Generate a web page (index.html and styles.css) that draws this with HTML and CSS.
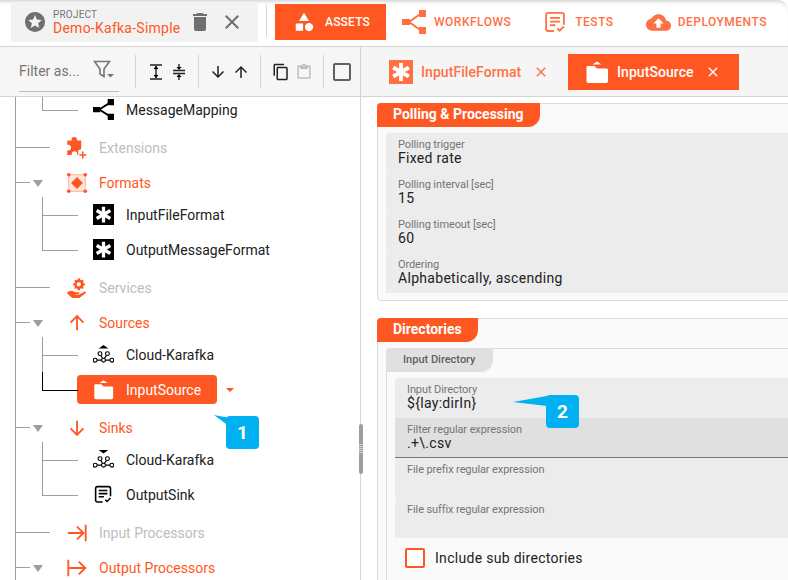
FILE: index.html
```html
<!DOCTYPE html>
<html lang="en">
<head>
<meta charset="utf-8">
<title>Demo-Kafka-Simple</title>
<link rel="stylesheet" href="styles.css">
</head>
<body>
<div class="app">
  <header class="header">
    <div class="project">
      <svg class="project-star" viewBox="0 0 24 24"><path d="M16.23,18L12,15.45L7.77,18L8.89,13.19L5.16,9.96L10.08,9.54L12,5L13.92,9.53L18.84,9.95L15.11,13.18L16.23,18M12,2C6.47,2 2,6.47 2,12A10,10 0 0,0 12,22A10,10 0 0,0 22,12C22,6.47 17.5,2 12,2Z"/></svg>
      <div class="project-text">
        <div class="project-label">PROJECT</div>
        <div class="project-name">Demo-Kafka-Simple</div>
      </div>
      <svg class="project-trash" viewBox="0 0 24 24"><path d="M19 4h-3.5l-1-1h-5l-1 1H5v2h14V4zM6 19a2 2 0 0 0 2 2h8a2 2 0 0 0 2-2V7H6v12z"/></svg>
      <svg class="project-close" viewBox="0 0 24 24"><path d="M19 6.41L17.59 5 12 10.59 6.41 5 5 6.41 10.59 12 5 17.59 6.41 19 12 13.41 17.59 19 19 17.59 13.41 12z"/></svg>
    </div>
    <div class="header-sep"></div>
    <nav class="nav">
      <div class="nav-item nav-active">
        <svg class="nav-icon-shapes" viewBox="0 0 24 24"><path d="M11,13.5V21.5H3V13.5H11M12,2L17.5,11H6.5L12,2M17.5,13C20,13 22,15 22,17.5C22,20 20,22 17.5,22C15,22 13,20 13,17.5C13,15 15,13 17.5,13Z"/></svg>
        <span>ASSETS</span>
      </div>
      <div class="nav-item nav-workflows">
        <svg class="nav-icon-flow" viewBox="0 0 24 24"><path d="M0 9h8v6H0zM17 0h7v7h-7zM17 17h7v7h-7z"/><path class="flow-line" d="M7 12 L19 3.5M7 12 L19 20.5"/></svg>
        <span>WORKFLOWS</span>
      </div>
      <div class="nav-item nav-tests">
        <svg class="nav-icon-tests" viewBox="0 0 24 24"><path class="doc-line" d="M11 21.8H4.5a2.2 2.2 0 0 1-2.2-2.2V4.2A2.2 2.2 0 0 1 4.500 2h15a2.200 2.200 0 0 1 2.200 2.200v10.800"/><path class="doc-line" d="M6.500 7.500h11M6.500 11.500h11M6.500 15.500h6M14.500 19l2.500 2.500 4.800-4.800"/></svg>
        <span>TESTS</span>
      </div>
      <div class="nav-item nav-deploy">
        <svg class="nav-icon-cloud" viewBox="0 0 24 24"><path d="M19.35 10.04C18.67 6.59 15.64 4 12 4 9.11 4 6.600 5.640 5.350 8.040 2.340 8.360 0 10.910 0 14c0 3.310 2.690 6 6 6h13c2.760 0 5-2.240 5-5 0-2.640-2.050-4.780-4.650-4.960zM14 13v4h-4v-4H7l5-5 5 5h-3z"/></svg>
        <span>DEPLOYMENTS</span>
      </div>
    </nav>
  </header>

  <div class="main">
    <aside class="left">
      <div class="toolbar">
        <div class="filter">
          <span class="filter-input">Filter as...</span>
          <svg class="filter-icon" viewBox="0 0 22 20"><path class="filter-stroke" d="M1.500 1.500h15L11 9v7.500L7 14V9z"/><path class="filter-caret" d="M14 14h7l-3.500 3.500z"/></svg>
        </div>
        <div class="tool-sep sep-a"></div>
        <svg class="tool tool-expand" viewBox="0 0 12 16"><path class="tool-stroke" d="M0 1h12M0 15h12M6 2v12"/><path d="M3.500 5 6 2l2.500 3zM3.500 11 6 14l2.500-3z"/></svg>
        <svg class="tool tool-collapse" viewBox="0 0 12 16"><path class="tool-stroke" d="M0 6.500h12M0 9.500h12M6 0v5M6 11v5"/><path d="M3.500 3 6 6l2.500-3zM3.500 13 6 10l2.500 3z"/></svg>
        <div class="tool-sep sep-b"></div>
        <svg class="tool tool-arrow" viewBox="0 0 24 24"><path d="M20 12l-1.410-1.410L13 16.170V4h-2v12.170l-5.580-5.590L4 12l8 8 8-8z"/></svg>
        <svg class="tool tool-arrow tool-up" viewBox="0 0 24 24"><path d="M4 12l1.410 1.410L11 7.830V20h2V7.830l5.580 5.590L20 12l-8-8-8 8z"/></svg>
        <div class="tool-sep sep-c"></div>
        <svg class="tool tool-copy" viewBox="0 0 24 24"><path d="M16 1H4c-1.100 0-2 .9-2 2v14h2V3h12V1zm3 4H8c-1.100 0-2 .9-2 2v14c0 1.100.9 2 2 2h11c1.100 0 2-.9 2-2V7c0-1.100-.9-2-2-2zm0 16H8V7h11v14z"/></svg>
        <svg class="tool tool-paste" viewBox="0 0 24 24"><path d="M19 3h-4.180C14.400 1.840 13.300 1 12 1s-2.400.84-2.820 2H5c-1.100 0-2 .9-2 2v14c0 1.100.9 2 2 2h14c1.100 0 2-.9 2-2V5c0-1.100-.9-2-2-2zm-7 0c.55 0 1 .45 1 1s-.45 1-1 1-1-.45-1-1 .45-1 1-1zm7 16H5V5h2v3h10V5h2v14z"/></svg>
        <div class="tool-sep sep-d"></div>
        <svg class="tool tool-check" viewBox="3 3 18 18"><path d="M19 5v14H5V5h14m0-2H5c-1.100 0-2 .9-2 2v14c0 1.100.9 2 2 2h14c1.100 0 2-.9 2-2V5c0-1.100-.9-2-2-2z"/></svg>
      </div>

      <div class="tree-wrap">
        <div class="tree">
          <div class="children first-children">
            <div class="leaf last">
              <svg class="ico" viewBox="2 2 20 20"><path d="M2 9.500h7v5H2zM16 2h6v6h-6zM16 16h6v6h-6z"/><path class="graph-line" d="M8 12l11-7M8 12l11 7"/></svg>
              <span class="label">MessageMapping</span>
            </div>
          </div>

          <div class="node">
            <span class="stub"></span>
            <svg class="ico-top o" viewBox="2.500 1 20.500 22"><path d="M17 4.500h-4.300V3.800a2.700 2.700 0 0 0-5.400 0v.7H3v4.300h1a2.800 2.800 0 0 1 0 5.600H3V19h4.500v-1a2.700 2.700 0 0 1 5.400 0v1H14v-5h1a2 2 0 0 0 2-2z"/><path class="plus" d="M18.500 15.500v7M15 19h7"/></svg>
            <span class="label muted">Extensions</span>
          </div>

          <div class="node">
            <span class="stub short"></span><span class="caret"></span>
            <svg class="ico-top o" viewBox="0 0 24 24"><rect class="sel-box" x="3" y="3" width="18" height="18"/><circle cx="3" cy="3" r="2"/><circle cx="21" cy="3" r="2"/><circle cx="3" cy="21" r="2"/><circle cx="21" cy="21" r="2"/><path d="M12 5.500 18.500 12 12 18.500 5.500 12z"/></svg>
            <span class="label o">Formats</span>
          </div>
          <div class="children">
            <div class="leaf">
              <svg class="ico" viewBox="0 0 24 24"><rect width="24" height="24"/><path class="star-w" d="M12 3v18M4.200 7.500l15.600 9M4.200 16.500l15.600-9"/></svg>
              <span class="label">InputFileFormat</span>
            </div>
            <div class="leaf last">
              <svg class="ico" viewBox="0 0 24 24"><rect width="24" height="24"/><path class="star-w" d="M12 3v18M4.200 7.500l15.600 9M4.200 16.500l15.600-9"/></svg>
              <span class="label">OutputMessageFormat</span>
            </div>
          </div>

          <div class="node">
            <span class="stub"></span>
            <svg class="ico-top o" viewBox="0 0 24 24"><path d="M12.800 1.500h2.400l.3 1.500 1.200.6 1.400-.7 1.200 1.200-.7 1.400.5 1.200 1.500.4V9l-1.500.4-.5 1.200.7 1.300-1.200 1.300-1.400-.8-1.200.5-.3 1.600h-2.400l-.4-1.600-1.200-.5-1.300.8L9.100 12l.7-1.300-.5-1.200L7.800 9V7.100l1.500-.4.500-1.200-.7-1.400 1.200-1.200 1.300.7 1.200-.6z"/><circle class="gear-hole" cx="14" cy="8" r="2.300"/><path d="M1 17.500c1.500-2 4-3 6-2.300l3.500 1.300h3c1.500 0 1.500 2 0 2h-3.500v.5h4.500l5.500-3c1.500-.8 2.500 1 1.300 1.800L14.500 23H7L4.500 21z"/></svg>
            <span class="label muted">Services</span>
          </div>

          <div class="node">
            <span class="stub short"></span><span class="caret"></span>
            <svg class="ico-top line-ico" viewBox="0 0 24 24"><path d="M12 20V5M5 11.500 12 4.500l7 7"/></svg>
            <span class="label o">Sources</span>
          </div>
          <div class="children">
            <div class="leaf">
              <svg class="ico" viewBox="0 0 24 24"><path d="M6.500 5 12 1 17.500 5z"/><g class="kafka"><circle cx="8" cy="11" r="2.200"/><circle cx="16.500" cy="11" r="2.200"/><circle cx="2.500" cy="18.500" r="2.200"/><circle cx="12" cy="18.500" r="2.200"/><circle cx="21.500" cy="18.500" r="2.200"/><path d="M4.700 18.500h5.100M14.200 18.500h5.100M9 13l2 3.500M15.500 13l-2.500 3.500"/></g></svg>
              <span class="label">Cloud-Karafka</span>
            </div>
            <div class="leaf selected last">
              <div class="pill">
                <svg class="ico" viewBox="0 0 24 24"><path class="w" d="M7.500 4.500 12 1.500l4.500 3z"/><path class="w" d="M1.500 7.500C1.500 6.500 2.200 6 3 6h6.500l2.500 2.500h9.500c.9 0 1.500.7 1.500 1.500v11c0 1-.7 2-1.500 2h-18C2.100 23 1.500 22 1.500 21z"/></svg>
                <span class="label">InputSource</span>
              </div>
              <span class="pill-caret"></span>
            </div>
          </div>

          <div class="node">
            <span class="stub short"></span><span class="caret"></span>
            <svg class="ico-top line-ico" viewBox="0 0 24 24"><path d="M12 4v15M5 12.500l7 7 7-7"/></svg>
            <span class="label o">Sinks</span>
          </div>
          <div class="children">
            <div class="leaf">
              <svg class="ico" viewBox="0 0 24 24"><path d="M6.500 1h11L12 5z"/><g class="kafka"><circle cx="8" cy="11" r="2.200"/><circle cx="16.500" cy="11" r="2.200"/><circle cx="2.500" cy="18.500" r="2.200"/><circle cx="12" cy="18.500" r="2.200"/><circle cx="21.500" cy="18.500" r="2.200"/><path d="M4.700 18.500h5.100M14.200 18.500h5.100M9 13l2 3.500M15.500 13l-2.500 3.500"/></g></svg>
              <span class="label">Cloud-Karafka</span>
            </div>
            <div class="leaf last">
              <svg class="ico" viewBox="0 0 24 24"><g class="tests-k"><path d="M11 20.500H5a2 2 0 0 1-2-2V5a2 2 0 0 1 2-2h13a2 2 0 0 1 2 2v9"/><path d="M6.500 7.500h10M6.500 11h10M6.500 14.500h6M14 18l2 2 4-4"/></g></svg>
              <span class="label">OutputSink</span>
            </div>
          </div>

          <div class="node">
            <span class="stub"></span>
            <svg class="ico-top line-ico" viewBox="0 0 24 24"><path d="M2 12h17M12 5l7 7-7 7M21.500 3v18"/></svg>
            <span class="label muted">Input Processors</span>
          </div>
          <div class="node">
            <span class="stub short"></span><span class="caret"></span>
            <svg class="ico-top line-ico" viewBox="0 0 24 24"><path d="M2.500 3v18M3 12h18M14 5l7 7-7 7"/></svg>
            <span class="label o">Output Processors</span>
          </div>
        </div>
      </div>
    </aside>

    <section class="right">
      <div class="tabs">
        <div class="tab">
          <svg class="tab-ico" viewBox="0 0 24 24"><rect width="24" height="24"/><path class="star-w2" d="M12 3v18M4.200 7.500l15.600 9M4.200 16.500l15.600-9"/></svg>
          <span class="tab-label">InputFileFormat</span>
          <svg class="tab-x" viewBox="0 0 24 24"><path d="M19 6.410L17.590 5 12 10.590 6.410 5 5 6.410 10.590 12 5 17.590 6.410 19 12 13.410 17.590 19 19 17.590 13.410 12z"/></svg>
        </div>
        <div class="tab tab-active">
          <svg class="tab-ico" viewBox="0 0 24 24"><path d="M7.500 4.500 12 1.500l4.500 3z"/><path d="M1.500 7.500C1.500 6.500 2.200 6 3 6h6.500l2.500 2.500h9.500c.9 0 1.500.7 1.500 1.500v11c0 1-.7 2-1.500 2h-18C2.100 23 1.500 22 1.500 21z"/></svg>
          <span class="tab-label">InputSource</span>
          <svg class="tab-x" viewBox="0 0 24 24"><path d="M19 6.410L17.590 5 12 10.590 6.410 5 5 6.410 10.590 12 5 17.590 6.410 19 12 13.410 17.590 19 19 17.590 13.410 12z"/></svg>
        </div>
      </div>
      <div class="content">
        <div class="card">
          <div class="legend">Polling &amp; Processing</div>
          <div class="fields">
            <div class="field"><div class="f-label">Polling trigger</div><div class="f-value">Fixed rate</div></div>
            <div class="field"><div class="f-label">Polling interval [sec]</div><div class="f-value">15</div></div>
            <div class="field"><div class="f-label">Polling timeout [sec]</div><div class="f-value">60</div></div>
            <div class="field"><div class="f-label">Ordering</div><div class="f-value">Alphabetically, ascending</div></div>
          </div>
        </div>
        <div class="card card-dirs">
          <div class="legend">Directories</div>
          <div class="inner">
            <div class="inner-tab">Input Directory</div>
            <div class="fields inner-fields">
              <div class="field"><div class="f-label">Input Directory</div><div class="f-value">${lay:dirIn}</div></div>
              <div class="field field-hover"><div class="f-label">Filter regular expression</div><div class="f-value">.+\.csv</div></div>
              <div class="field"><div class="f-label">File prefix regular expression</div><div class="f-value"></div></div>
              <div class="field"><div class="f-label">File suffix regular expression</div><div class="f-value"></div></div>
            </div>
            <div class="check-row"><span class="check-box"></span><span class="check-label">Include sub directories</span></div>
          </div>
        </div>
      </div>
    </section>
  </div>

  <div class="splitter"></div>
  <div class="callout callout-1">
    <svg class="tail tail-1" viewBox="0 0 16 12"><path d="M0 0 16 3v9z"/></svg>
    <span>1</span>
  </div>
  <div class="callout callout-2">
    <svg class="tail tail-2" viewBox="0 0 34 10"><path d="M0 6 34 0v10z"/></svg>
    <span>2</span>
  </div>
</div>
</body>
</html>
```

FILE: styles.css
```css
* { box-sizing: border-box; }
html, body { margin: 0; padding: 0; height: 100%; background: #fff; }
body { font-family: Roboto, "Liberation Sans", sans-serif; color: #212121; overflow: hidden; }
.app { position: relative; width: 788px; height: 580px; overflow: hidden; display: flex; flex-direction: column; }

/* Header */
.header { height: 47px; flex: none; display: flex; align-items: flex-start; border-bottom: 1px solid #d4d4d4; box-shadow: inset 0 4px 4px -3px rgba(0,0,0,.22); border-top-right-radius: 10px; }
.project { margin: 2px 0 0 11px; width: 247px; height: 40px; background: #f2f2f2; display: flex; align-items: center; border-radius: 2px; }
.project-star { width: 24px; height: 24px; margin-left: 12px; fill: #6f6f6f; flex: none; }
.project-text { margin-left: 6px; width: 141px; }
.project-label { font-size: 10px; line-height: 11px; color: #757575; letter-spacing: .2px; }
.project-name { font-size: 14px; line-height: 16px; color: #ff5722; letter-spacing: .25px; white-space: nowrap; }
.project-trash { width: 24px; height: 24px; fill: #6f6f6f; margin-left: -6px; flex: none; }
.project-close { width: 24px; height: 24px; fill: #6f6f6f; margin-left: 8px; flex: none; }
.header-sep { width: 1px; height: 32px; background: #d4d4d4; margin: 5px 0 0 8px; flex: none; }
.nav { display: flex; margin: 4px 0 0 8px; }
.nav-item { height: 36px; display: flex; align-items: center; font-size: 12px; font-weight: 500; color: #ff7043; letter-spacing: .5px; }
.nav-active { width: 111px; background: #ff5722; color: #fff; padding-left: 18px; gap: 10px; letter-spacing: .2px; }
.nav-active svg { width: 22px; height: 22px; fill: #fff; flex: none; }
.nav-workflows { margin-left: 16px; gap: 8px; }
.nav-tests { margin-left: 33px; gap: 9px; }
.nav-deploy { margin-left: 32px; gap: 7px; }
.nav-icon-flow { width: 24px; height: 24px; fill: #ff7043; }
.flow-line { fill: none; stroke: #ff7043; stroke-width: 2; }
.nav-icon-tests { width: 22px; height: 22px; }
.doc-line { fill: none; stroke: #ff7043; stroke-width: 2; }
.nav-icon-cloud { width: 25px; height: 25px; fill: #ff7043; }

/* Main */
.main { flex: 1; display: flex; min-height: 0; }
.left { width: 361px; flex: none; border-right: 1px solid #d4d4d4; display: flex; flex-direction: column; }
.toolbar { height: 50px; flex: none; background: #f6f6f6; border-bottom: 1px solid #d4d4d4; display: flex; align-items: center; }
.filter { width: 100px; margin: 0 0 2px 19px; height: 43px; padding-top: 2px; border-bottom: 1px solid #bdbdbd; display: flex; align-items: center; justify-content: space-between; flex: none; }
.filter-input { font-size: 14px; color: #757575; }
.filter-icon { width: 22px; height: 20px; margin: -2px 4px 0 0; flex: none; }
.filter-stroke { fill: none; stroke: #757575; stroke-width: 1.6; }
.filter-caret { fill: #757575; }
.tool-sep { width: 1px; height: 33px; background: #d4d4d4; flex: none; }
.sep-a { margin-left: 16px; }
.sep-b { margin-left: 13px; }
.sep-c { margin-left: 10px; }
.sep-d { margin-left: 10px; }
.tool { flex: none; }
.tool-stroke { fill: none; stroke: #212121; stroke-width: 1.4; }
.tool-expand { width: 12px; height: 16px; margin-left: 14px; }
.tool-collapse { width: 12px; height: 16px; margin-left: 11px; }
.tool-arrow { width: 18px; height: 18px; margin-left: 10px; fill: #212121; }
.tool-up { margin-left: 5px; }
.tool-copy { width: 18px; height: 18px; margin-left: 11px; fill: #212121; }
.tool-paste { width: 18px; height: 18px; margin-left: 5px; fill: #bdbdbd; }
.tool-check { width: 18px; height: 18px; margin-left: 9px; fill: #616161; }

/* Tree */
.tree-wrap { flex: 1; overflow: hidden; min-height: 0; }
.tree { position: relative; margin-top: -5px; }
.tree::before { content: ""; position: absolute; left: 15px; top: 0; bottom: -40px; width: 1px; background: #9e9e9e; }
.node { height: 35px; display: flex; align-items: center; }
.stub { width: 34px; height: 1px; margin-left: 16px; background: #9e9e9e; flex: none; }
.stub.short { width: 14px; }
.caret { height: 0; border-left: 5px solid transparent; border-right: 5px solid transparent; border-top: 7px solid #9e9e9e; margin: 1px 7px 0 3px; flex: none; width: 10px; }
.ico-top { width: 22px; height: 22px; margin-left: 16px; margin-right: 11px; flex: none; }
.o { color: #ff5722; fill: #ff5722; }
.label { font-size: 14px; line-height: 20px; white-space: nowrap; color: #212121; }
.label.o { color: #ff5722; }
.label.muted { color: #bdbdbd; }
.plus { fill: none; stroke: #ff5722; stroke-width: 1.500; }
.sel-box { fill: #ffccbc; fill-opacity: .5; stroke: #ffab91; stroke-width: 1; }
.gear-hole { fill: #fff; }
.line-ico { fill: none; stroke: #ff5722; stroke-width: 2; }

.children { margin: -3px 0 3px; }
.first-children { margin-top: 0; }
.leaf { height: 35px; margin-left: 77px; display: flex; align-items: center; position: relative; }
.leaf::before { content: ""; position: absolute; left: -35px; top: 0; width: 35px; height: 50%; border-left: 1px solid #9e9e9e; border-bottom: 1px solid #9e9e9e; }
.leaf::after { content: ""; position: absolute; left: -35px; top: 50%; height: 50%; width: 1px; background: #9e9e9e; }
.leaf.last::after { display: none; }
.leaf.selected::before { border-color: #000; }
.ico { width: 21px; height: 21px; margin-left: 16px; margin-right: 12px; flex: none; fill: #000; }
.graph-line { fill: none; stroke: #000; stroke-width: 1.800; }
.star-w { fill: none; stroke: #fff; stroke-width: 3.800; }
.kafka { fill: none; stroke: #000; stroke-width: 1.300; }
.tests-k { fill: none; stroke: #000; stroke-width: 1.800; }
.pill { width: 140px; height: 29px; background: #ff5722; border-radius: 4px; display: flex; align-items: center; }
.pill .label { color: #fff; }
.pill .w { fill: #fff; }
.pill-caret { width: 0; height: 0; border-left: 4px solid transparent; border-right: 4px solid transparent; border-top: 4px solid #ff5722; margin-left: 9px; flex: none; }

/* Tabs */
.right { flex: 1; min-width: 0; display: flex; flex-direction: column; }
.tabs { height: 50px; flex: none; background: #f5f5f5; border-bottom: 1px solid #d4d4d4; display: flex; padding: 7px 0 0 28px; }
.tab { height: 36px; display: flex; align-items: center; font-size: 14px; font-weight: 500; color: #ff7043; width: 179px; flex: none; }
.tab-ico { width: 24px; height: 24px; flex: none; fill: #ff7043; }
.star-w2 { fill: none; stroke: #fff; stroke-width: 3.800; }
.tab-label { margin-left: 8px; width: 100px; white-space: nowrap; letter-spacing: .07px; }
.tab-x { width: 16px; height: 16px; fill: #ff7043; flex: none; margin-left: 12px; }
.tab-active { background: #ff5722; color: #fff; width: 171px; padding-left: 17px; }
.tab-active .tab-ico { fill: #fff; }
.tab-active .tab-label { width: 76px; }
.tab-active .tab-x { fill: #fff; }

/* Content */
.content { flex: 1; min-height: 0; overflow: hidden; padding: 6px 0 0 16px; background: #fff; }
.card { margin-right: -30px; border: 1px solid #dcdcdc; border-radius: 4px; background: #fafafa; padding-bottom: 7px; }
.card-dirs { margin-top: 17px; }
.legend { display: inline-block; height: 24px; line-height: 22px; padding: 0 16px; background: #ff5722; color: #fff; font-size: 14px; font-weight: 700; border-radius: 4px 0 12px 0; margin: -1px 0 0 -1px; vertical-align: top; }
.fields { margin: 6px 0 0 8px; }
.field { height: 40px; background: #ececec; padding: 6px 12px 0; border-top-left-radius: 4px; }
.f-label { font-size: 11px; line-height: 12px; color: #757575; letter-spacing: -.1px; }
.f-value { font-size: 14px; line-height: 16px; color: #212121; letter-spacing: .3px; margin-top: -1px; }
.inner { margin: 6px 0 0 8px; border: 1px solid #dcdcdc; border-right: 0; border-bottom: 0; border-radius: 4px 0 0 0; padding-bottom: 30px; }
.inner-tab { display: inline-block; height: 24px; width: 107px; margin: -1px 0 0 -1px; background: #e0e0e0; border-radius: 4px 0 12px 0; font-size: 11px; font-weight: 500; color: #616161; line-height: 24px; padding-left: 17px; vertical-align: top; }
.inner-fields { margin: 6px 0 0 8px; }
.field-hover { background: #e0e0e0; border-bottom: 1px solid #757575; border-top-left-radius: 0; }
.check-row { display: flex; align-items: center; margin: 9px 0 0 18px; gap: 10px; }
.check-box { width: 20px; height: 20px; border: 2px solid #ff5722; border-radius: 2px; flex: none; background: #fff; margin-top: 1px; }
.check-label { font-size: 14px; letter-spacing: .3px; color: #212121; }

/* Overlays */
.splitter { position: absolute; left: 359px; top: 424px; width: 4px; height: 50px; border-radius: 2px; background: repeating-linear-gradient(#cfcfcf 0 1px, #9e9e9e 1px 2px) center / 100% 10px no-repeat, #9e9e9e; }
.callout { position: absolute; width: 33px; height: 33px; border-radius: 4px; background: #00b0f0; color: #fff; font-size: 19px; font-weight: 700; display: flex; align-items: center; justify-content: center; }
.callout-1 { left: 226px; top: 416px; }
.callout-2 { left: 546px; top: 395px; }
.tail { position: absolute; fill: #00b0f0; }
.tail-1 { left: -12px; top: -1px; width: 16px; height: 12px; }
.tail-2 { left: -33px; top: 1px; width: 34px; height: 10px; }
```
